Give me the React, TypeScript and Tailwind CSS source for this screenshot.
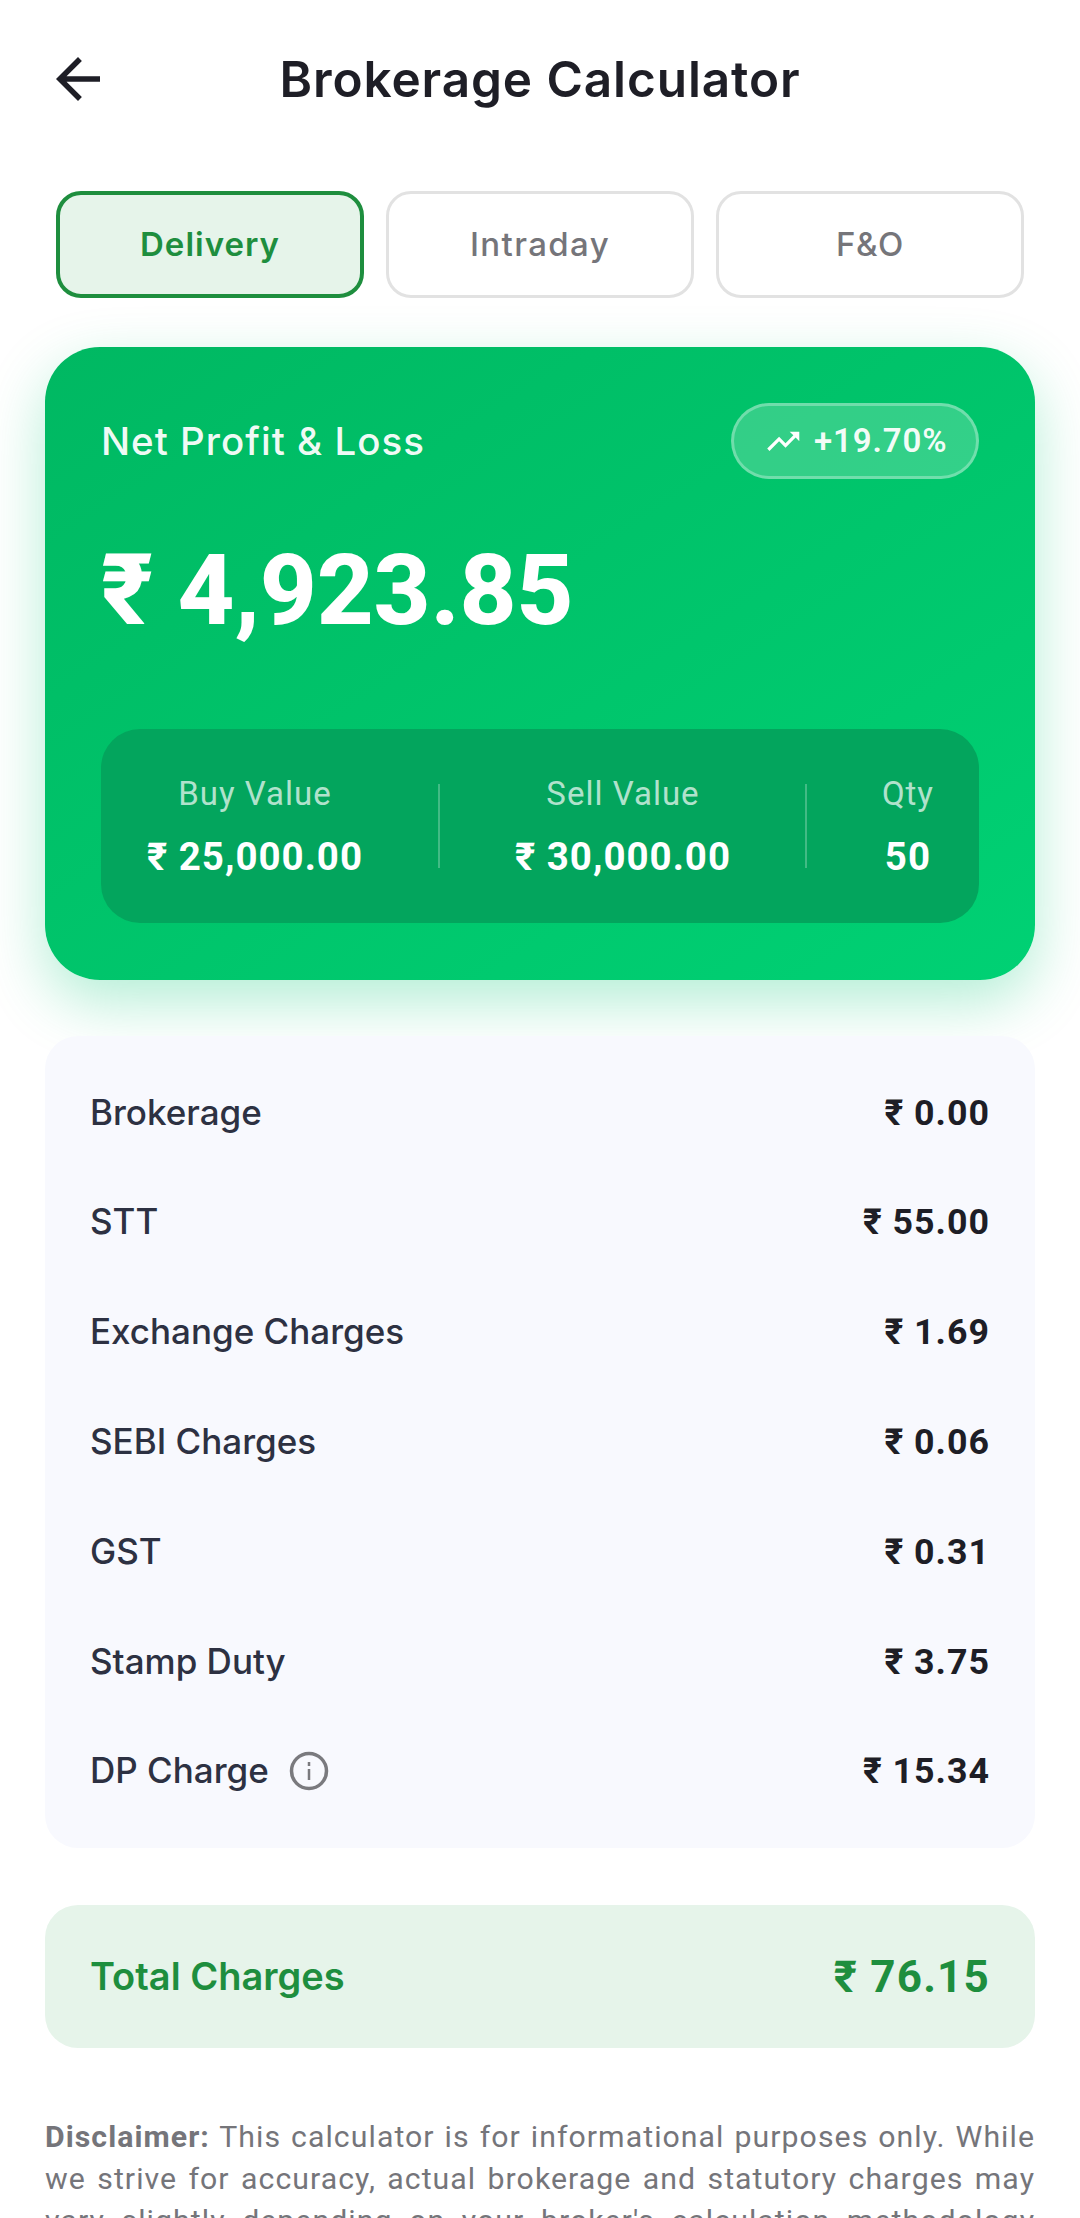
import React from "react";

const rows = [
  ["Brokerage", "₹ 0.00"],
  ["STT", "₹ 55.00"],
  ["Exchange Charges", "₹ 1.69"],
  ["SEBI Charges", "₹ 0.06"],
  ["GST", "₹ 0.31"],
  ["Stamp Duty", "₹ 3.75"],
];

function Stat({ label, value, className }: { label: string; value: string; className: string }) {
  return (
    <div className={`flex flex-col items-center pt-[4px] whitespace-nowrap ${className}`}>
      <span className="text-[33px] leading-[40px] text-white/70 tracking-[1px] font-['Roboto',sans-serif]">{label}</span>
      <span className="mt-[18px] text-[38.5px] leading-[50px] font-bold text-white tracking-[1px] font-['Roboto',sans-serif]">{value}</span>
    </div>
  );
}

export default function App() {
  return (
    <div className="w-[1080px] h-[2218px] overflow-hidden bg-white font-['Inter',sans-serif]">
      <header className="relative h-[159px] flex items-center justify-center">
        <svg className="absolute left-[45px] top-[46px] w-[66px] h-[66px]" viewBox="0 0 24 24" fill="#1e1e26">
          <path d="M20 11H7.83l5.59-5.59L12 4l-8 8 8 8 1.41-1.41L7.83 13H20v-2z" />
        </svg>
        <h1 className="text-[49.5px] leading-[60px] font-semibold text-[#1e1e26] tracking-[0.9px] -mt-[2px]">Brokerage Calculator</h1>
      </header>
      <div className="mt-[32px] px-[56px] flex gap-[22px]">
        <div className="w-[308px] h-[107px] rounded-[25px] border-[4px] border-[#1e8e3e] bg-[#e6f4ea] flex items-center justify-center text-[33px] font-semibold text-[#1e8e3e] tracking-[1px]">Delivery</div>
        <div className="w-[308px] h-[107px] rounded-[25px] border-[3px] border-[#e2e2e2] bg-white flex items-center justify-center text-[33px] font-medium text-[#75757a] tracking-[1.4px]">Intraday</div>
        <div className="w-[308px] h-[107px] rounded-[25px] border-[3px] border-[#e2e2e2] bg-white flex items-center justify-center text-[33px] font-medium text-[#75757a] tracking-[0.5px]">F&amp;O</div>
      </div>
      <section className="mt-[49px] mx-[45px] h-[633px] rounded-[55px] bg-linear-to-br from-[#00b862] to-[#00d174] shadow-[0_22px_60px_rgba(0,200,117,0.3)] px-[56px] pt-[56px]">
        <div className="flex items-center justify-between">
          <span className="text-[38.5px] leading-[76px] font-medium text-white/95 tracking-[1px]">Net Profit &amp; Loss</span>
          <span className="h-[76px] w-[248px] rounded-full border-[3px] border-white/30 bg-white/20 flex items-center justify-center gap-[11px] pl-[2px]">
            <svg className="w-[38.5px] h-[38.5px]" viewBox="0 0 24 24" fill="#fff">
              <path d="M16 6l2.29 2.29-4.88 4.88-4-4L2 16.59 3.41 18l6-6 4 4 6.3-6.29L22 12V6z" />
            </svg>
            <span className="text-[33px] font-semibold text-white/95 font-['Roboto',sans-serif] tracking-[0.9px]">+19.70%</span>
          </span>
        </div>
        <div className="mt-[51px] h-[120px] flex items-center text-[99px] leading-[120px] font-extrabold text-white font-['Roboto',sans-serif] tracking-[-0.2px]">₹ 4,923.85</div>
        <div className="mt-[79px] h-[194px] rounded-[39px] bg-[#03a55d] pl-[46px] flex items-center">
          <Stat label="Buy Value" value="₹ 25,000.00" className="w-[216px]" />
          <div className="ml-[75px] w-[2px] h-[84px] bg-white/25" />
          <Stat label="Sell Value" value="₹ 30,000.00" className="ml-[75px] w-[216px]" />
          <div className="ml-[74px] w-[2px] h-[84px] bg-white/25" />
          <Stat label="Qty" value="50" className="ml-auto mr-[45px]" />
        </div>
      </section>
      <section className="mt-[56px] mx-[45px] h-[812px] rounded-[33px] bg-[#f8f9fe] px-[45px] pt-[21px]">
        {rows.map(([k, v]) => (
          <div key={k} className="h-[109.8px] flex items-center justify-between">
            <span className="text-[35px] font-medium text-[#2d3142]">{k}</span>
            <span className="pt-[3px] text-[35.75px] font-bold text-[#1e1e26] font-['Roboto',sans-serif] tracking-[1px]">{v}</span>
          </div>
        ))}
        <div className="h-[109.8px] flex items-center justify-between">
          <span className="flex items-center gap-[20px]">
            <span className="text-[35px] font-medium text-[#2d3142]">DP Charge</span>
            <svg className="w-[40px] h-[40px]" viewBox="0 0 40 40" fill="none" stroke="#7a7a7e">
              <circle cx="20" cy="20" r="17.5" strokeWidth="3.5" />
              <path d="M20 18v11M20 11v4" strokeWidth="2.5" />
            </svg>
          </span>
          <span className="pt-[3px] text-[35.75px] font-bold text-[#1e1e26] font-['Roboto',sans-serif] tracking-[1px]">₹ 15.34</span>
        </div>
      </section>
      <section className="mt-[57px] mx-[45px] h-[143px] rounded-[33px] bg-[#e6f4ea] px-[45px] flex items-center justify-between">
        <span className="text-[38px] font-semibold text-[#1e8e3e]">Total Charges</span>
        <span className="text-[44px] font-bold text-[#1e8e3e] font-['Roboto',sans-serif] tracking-[1.2px]">₹ 76.15</span>
      </section>
      <p className="mt-[68px] mx-[45px] text-[30.25px] leading-[42px] text-[#75757a] text-justify tracking-[1.05px] font-['Roboto',sans-serif]">
        <b className="font-bold">Disclaimer:</b> This calculator is for informational purposes only. While we strive for accuracy, actual brokerage and statutory charges may vary slightly depending on your broker's calculation methodology and applicable taxes at the time of execution.
      </p>
    </div>
  );
}
